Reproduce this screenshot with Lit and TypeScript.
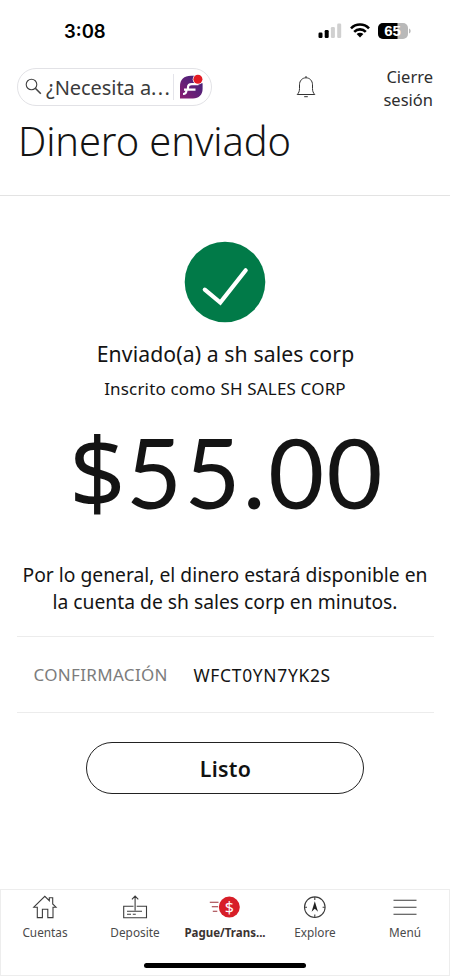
import { LitElement, html, css, svg } from "lit";

const bellIcon = html`<svg class="bell" width="20" height="24" viewBox="0 0 20 24" fill="none" stroke="#333" stroke-width="1">
  <path d="M10 1v1.8M1.2 19.5h17.6c-1.6-1.5-2.3-3.4-2.3-6V9.8c0-4-2.7-7-6.500-7s-6.500 3-6.500 7v3.700c0 2.600-.7 4.500-2.300 6zM8.200 21.700h3.600"/>
</svg>`;

const assistantIcon = html`<svg class="assistant" width="25" height="27" viewBox="0 0 25 27">
  <defs>
    <linearGradient id="brand" x1="0" y1="1" x2="1" y2="0">
      <stop offset="0" stop-color="#8c1d72"></stop>
      <stop offset=".5" stop-color="#602078"></stop>
      <stop offset="1" stop-color="#3d2579"></stop>
    </linearGradient>
  </defs>
  <path fill="url(#brand)" d="M12 1.800h4v7.400h7.600v5.600c0 6-3.600 9.600-9.600 9.600H1V12.500C1 5.600 5 1.800 12 1.800z"/>
  <path fill="none" stroke="#fff" stroke-width="2.200" d="M19.500 10.200h-6.700c-2.800 0-3.800 1.300-3.800 3.300v2.200M5 15.700h11.500M7.500 15.700c0 3-.8 4.300-3.500 4.300"/>
  <circle cx="18.900" cy="5.300" r="5.200" fill="#fff"/>
  <circle cx="18.900" cy="5.300" r="4.500" fill="#e31b23"/>
</svg>`;

const navIcon = (body: unknown) =>
  html`<svg width="32" height="24" viewBox="0 0 32 24" fill="none" stroke="#3c3c3c" stroke-width="1.100">${body}</svg>`;

const tabs = [
  {
    label: "Cuentas",
    icon: navIcon(svg`<path d="M4.800 12.200 15.800 1.300l4.500 4.400V2.800h3.400v6.200l3.300 3.200h-3v10.400h-5.200v-8.400h-5.400v8.400H8.300V12.200z"/>`),
  },
  {
    label: "Deposite",
    icon: navIcon(svg`<path d="M14.500 11.200H4.700v11.600h22.800V11.200H17.700M16.100 15.400V1.200M12.900 4.300l3.200-3.200 3.200 3.200M8 16.200h15M8 19.300h4M13.800 19.300h3"/>`),
  },
  {
    label: "Pague/Trans...",
    active: true,
    icon: navIcon(svg`<path stroke="#9b3038" d="M.8 7.200h8.700M2.800 11.700h6.200M3.800 16.200h4.500"/>
      <circle cx="20.300" cy="12.100" r="10.500" fill="#d71e28" stroke="none"/>
      <text class="coin" x="20.300" y="17.600" text-anchor="middle">$</text>`),
  },
  {
    label: "Explore",
    icon: navIcon(svg`<circle cx="15.800" cy="12.200" r="10.300"/>
      <path d="M15.800 2v3M15.800 19.400v3M5.500 12.200h2.500M23.600 12.200h2.500"/>
      <path fill="#222" stroke="none" d="m15.800 6.200 3.200 10.500-3.200-3-3.200 3z"/>`),
  },
  {
    label: "Menú",
    icon: navIcon(svg`<path d="M4.500 5.200h23M4.500 12.200h23M4.500 19.200h23"/>`),
  },
];

class AppRoot extends LitElement {
  static styles = css`
    :host {
      display: flex;
      flex-direction: column;
      height: 976px;
      background: #fff;
      color: #141414;
      font-family: "Noto Sans", sans-serif;
      overflow: hidden;
    }
    * { box-sizing: border-box; }
    svg { display: block; flex: none; }
    .status {
      height: 60px;
      flex: none;
      display: flex;
      align-items: center;
      justify-content: space-between;
      padding: 1px 39px 0 64px;
    }
    .time { font: 600 18.500px Inter, sans-serif; color: #000; }
    .signals { display: flex; align-items: center; gap: 8px; }
    .level { font: 700 15px "Liberation Sans", sans-serif; fill: #fff; }
    .header { height: 54px; flex: none; display: flex; padding: 0 17px; }
    .search {
      width: 195px;
      height: 38px;
      margin-top: 8px;
      border: 1px solid #e2e2e6;
      border-radius: 19px;
      display: flex;
      align-items: center;
      padding-left: 7px;
      color: #3b3b3b;
    }
    .query { font-size: 20px; line-height: 36px; padding-top: 1px; margin-left: 4px; width: 127px; white-space: nowrap; letter-spacing: -.05px; }
    .dots { letter-spacing: 1.300px; }
    .divider { width: 1px; height: 26px; background: #e4e4ea; }
    .assistant { margin-left: 5px; }
    .bell { margin: 15px 0 0 84px; }
    .logout { margin-left: auto; padding-top: 5px; text-align: right; font-size: 16.500px; line-height: 23px; color: #2e2e2e; }
    .title { height: 82px; flex: none; border-bottom: 1px solid #e3e3e3; padding-left: 18px; }
    h1 { margin: 0; font-weight: 300; font-size: 39.800px; line-height: 54px; letter-spacing: -.1px; white-space: nowrap; }
    main { display: flex; flex-direction: column; align-items: center; flex: 1; padding-top: 45px; }
    .sent { font-size: 21.200px; line-height: 30px; margin-top: 16px; letter-spacing: .1px; padding-left: 1px; }
    .alias { font-size: 17px; line-height: 24px; margin-top: 8px; letter-spacing: .17px; }
    .amount { display: flex; align-items: baseline; height: 120px; line-height: 120px; margin-top: 10px; padding-left: 4px; }
    .symbol { font-size: 99px; width: 57px; }
    .figure { font-family: Lato, sans-serif; font-size: 96.500px; letter-spacing: 2.500px; }
    .note { font-size: 19.300px; line-height: 27px; margin-top: 30px; text-align: center; white-space: nowrap; }
    .detail {
      width: 417px;
      height: 77px;
      margin-top: 21px;
      border: solid #ececec;
      border-width: 1px 0;
      display: flex;
      align-items: center;
      font-size: 17px;
      padding-left: 17px;
    }
    .key { color: #7c7c7c; width: 160px; letter-spacing: .33px; }
    .value { font-size: 17.400px; letter-spacing: .7px; }
    button {
      width: 278px;
      height: 52px;
      margin-top: 29px;
      border: 1.200px solid #222;
      border-radius: 26px;
      background: #fff;
      color: #111;
      font: 600 21.300px/1 "Noto Sans", sans-serif;
      letter-spacing: .3px;
      padding: 1px 0 0 1px;
    }
    nav { height: 87px; flex: none; box-shadow: inset 0 0 0 1px #ededed; position: relative; display: grid; grid-template-columns: repeat(5, 90px); padding-top: 6px; }
    .tab { display: flex; flex-direction: column; align-items: center; font-size: 11.800px; line-height: 17px; color: #4a4a4a; gap: 5px; white-space: nowrap; }
    .active { font-weight: 700; color: #3b3331; font-size: 11.500px; }
    .coin { font: 400 16px "Noto Sans", sans-serif; fill: #fff; stroke: none; }
    .home { position: absolute; left: 144px; bottom: 8px; width: 162px; height: 5px; border-radius: 3px; background: #000; }
  `;

  render() {
    return html`
      <div class="status">
        <span class="time">3:08</span>
        <div class="signals">
          <svg width="24" height="16" viewBox="0 0 24 16">
            <rect x="0.500" y="9.500" width="4" height="5.500" rx="1.200"/><rect x="6.700" y="7" width="4" height="8" rx="1.200"/>
            <rect x="12.900" y="4" width="4" height="11" rx="1.200" fill="#d0d0d0"/><rect x="19.200" y="0.500" width="4" height="14.500" rx="1.200" fill="#d0d0d0"/>
          </svg>
          <svg width="20" height="15" viewBox="0 0 20 15" fill="none" stroke="#000" stroke-width="2.600">
            <path d="M1 5.300a12.700 12.700 0 0 1 18 0M4.200 8.800a8.200 8.200 0 0 1 11.600 0"/>
            <path fill="#000" stroke="none" d="M6.600 11.100a4.900 4.900 0 0 1 6.800 0L10 14.600z"/>
          </svg>
          <svg width="33" height="16" viewBox="0 0 33 16">
            <rect width="30" height="16" rx="5" fill="#b9b9b9"/>
            <path d="M5 0h14.500v16H5a5 5 0 0 1-5-5V5a5 5 0 0 1 5-5z"/>
            <path d="M31 5.500c2.200.8 2.200 4.200 0 5z" fill="#b9b9b9"/>
            <text class="level" x="14.500" y="13" text-anchor="middle">65</text>
          </svg>
        </div>
      </div>
      <div class="header">
        <div class="search">
          <svg width="17" height="18" viewBox="0 0 17 18" fill="none" stroke="#444" stroke-width="1.100">
            <circle cx="6.500" cy="6.500" r="5.300"/><path d="m10.300 10.300 5.500 5.500" stroke-width="1.600"/>
          </svg>
          <span class="query">¿Necesita a<span class="dots">...</span></span>
          <span class="divider"></span>
          ${assistantIcon}
        </div>
        ${bellIcon}
        <div class="logout">Cierre<br />sesión</div>
      </div>
      <div class="title"><h1>Dinero enviado</h1></div>
      <main>
        <svg width="82" height="82" viewBox="0 0 82 82">
          <circle cx="41" cy="41" r="40.300" fill="#017a48"/>
          <path d="M20.800 48.700 36.300 61.500 61.700 29.300" fill="none" stroke="#fff" stroke-width="4.200" stroke-linecap="round"/>
        </svg>
        <div class="sent">Enviado(a) a sh sales corp</div>
        <div class="alias">Inscrito como SH SALES CORP</div>
        <div class="amount"><span class="symbol">$</span><span class="figure">55.00</span></div>
        <div class="note">Por lo general, el dinero estará disponible en<br />la cuenta de sh sales corp en minutos.</div>
        <div class="detail"><span class="key">CONFIRMACIÓN</span><span class="value">WFCT0YN7YK2S</span></div>
        <button>Listo</button>
      </main>
      <nav>
        ${tabs.map((t) => html`<div class="tab ${t.active ? "active" : ""}">${t.icon}<span>${t.label}</span></div>`)}
        <div class="home"></div>
      </nav>
    `;
  }
}
customElements.define("app-root", AppRoot);
